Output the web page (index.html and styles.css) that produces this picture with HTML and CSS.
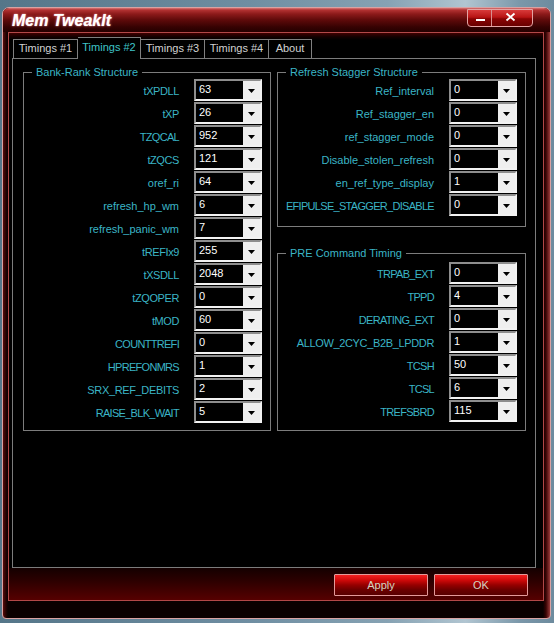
FILE: index.html
```html
<!DOCTYPE html>
<html>
<head>
<meta charset="utf-8">
<title>Mem TweakIt</title>
<link rel="stylesheet" href="styles.css">
</head>
<body>
<div class="window">
  <div class="titlebar">
    <span class="title">Mem TweakIt</span>
    <div class="caption-btns">
      <span class="cbtn min"><svg width="23" height="16" viewBox="0 0 23 16"><rect x="8" y="9" width="9" height="2" fill="#fff"/></svg></span>
      <span class="cbtn close"><svg width="40" height="16" viewBox="0 0 40 16"><path d="M14.5 3.5L22.5 10.5M22.5 3.5L14.5 10.5" stroke="#fff" stroke-width="1.8" fill="none"/></svg></span>
    </div>
  </div>
  <div class="client">
    <div class="tabs">
      <span class="tab w1">Timings #1</span>
      <span class="tab w2 active">Timings #2</span>
      <span class="tab w3">Timings #3</span>
      <span class="tab w4">Timings #4</span>
      <span class="tab w5">About</span>
    </div>
    <div class="panel">
      <div class="cols">
        <fieldset class="group left">
          <legend>Bank-Rank Structure</legend>
          <div class="row"><span class="lbl mc">tXPDLL</span><span class="combo"><span class="val">63</span><span class="drop"><svg width="7" height="4" viewBox="0 0 7 4"><path d="M0 0H7L3.5 4Z"/></svg></span></span></div>
          <div class="row"><span class="lbl mc">tXP</span><span class="combo"><span class="val">26</span><span class="drop"><svg width="7" height="4" viewBox="0 0 7 4"><path d="M0 0H7L3.5 4Z"/></svg></span></span></div>
          <div class="row"><span class="lbl caps">TZQCAL</span><span class="combo"><span class="val">952</span><span class="drop"><svg width="7" height="4" viewBox="0 0 7 4"><path d="M0 0H7L3.5 4Z"/></svg></span></span></div>
          <div class="row"><span class="lbl mc">tZQCS</span><span class="combo"><span class="val">121</span><span class="drop"><svg width="7" height="4" viewBox="0 0 7 4"><path d="M0 0H7L3.5 4Z"/></svg></span></span></div>
          <div class="row"><span class="lbl">oref_ri</span><span class="combo"><span class="val">64</span><span class="drop"><svg width="7" height="4" viewBox="0 0 7 4"><path d="M0 0H7L3.5 4Z"/></svg></span></span></div>
          <div class="row"><span class="lbl">refresh_hp_wm</span><span class="combo"><span class="val">6</span><span class="drop"><svg width="7" height="4" viewBox="0 0 7 4"><path d="M0 0H7L3.5 4Z"/></svg></span></span></div>
          <div class="row"><span class="lbl">refresh_panic_wm</span><span class="combo"><span class="val">7</span><span class="drop"><svg width="7" height="4" viewBox="0 0 7 4"><path d="M0 0H7L3.5 4Z"/></svg></span></span></div>
          <div class="row"><span class="lbl mc">tREFIx9</span><span class="combo"><span class="val">255</span><span class="drop"><svg width="7" height="4" viewBox="0 0 7 4"><path d="M0 0H7L3.5 4Z"/></svg></span></span></div>
          <div class="row"><span class="lbl mc">tXSDLL</span><span class="combo"><span class="val">2048</span><span class="drop"><svg width="7" height="4" viewBox="0 0 7 4"><path d="M0 0H7L3.5 4Z"/></svg></span></span></div>
          <div class="row"><span class="lbl mc">tZQOPER</span><span class="combo"><span class="val">0</span><span class="drop"><svg width="7" height="4" viewBox="0 0 7 4"><path d="M0 0H7L3.5 4Z"/></svg></span></span></div>
          <div class="row"><span class="lbl mc">tMOD</span><span class="combo"><span class="val">60</span><span class="drop"><svg width="7" height="4" viewBox="0 0 7 4"><path d="M0 0H7L3.5 4Z"/></svg></span></span></div>
          <div class="row"><span class="lbl caps">COUNTTREFI</span><span class="combo"><span class="val">0</span><span class="drop"><svg width="7" height="4" viewBox="0 0 7 4"><path d="M0 0H7L3.5 4Z"/></svg></span></span></div>
          <div class="row"><span class="lbl caps">HPREFONMRS</span><span class="combo"><span class="val">1</span><span class="drop"><svg width="7" height="4" viewBox="0 0 7 4"><path d="M0 0H7L3.5 4Z"/></svg></span></span></div>
          <div class="row"><span class="lbl caps wide">SRX_REF_DEBITS</span><span class="combo"><span class="val">2</span><span class="drop"><svg width="7" height="4" viewBox="0 0 7 4"><path d="M0 0H7L3.5 4Z"/></svg></span></span></div>
          <div class="row"><span class="lbl caps">RAISE_BLK_WAIT</span><span class="combo"><span class="val">5</span><span class="drop"><svg width="7" height="4" viewBox="0 0 7 4"><path d="M0 0H7L3.5 4Z"/></svg></span></span></div>
        </fieldset>
        <div class="rightcol">
          <fieldset class="group g1">
            <legend>Refresh Stagger Structure</legend>
            <div class="row"><span class="lbl">Ref_interval</span><span class="combo"><span class="val">0</span><span class="drop"><svg width="7" height="4" viewBox="0 0 7 4"><path d="M0 0H7L3.5 4Z"/></svg></span></span></div>
            <div class="row"><span class="lbl">Ref_stagger_en</span><span class="combo"><span class="val">0</span><span class="drop"><svg width="7" height="4" viewBox="0 0 7 4"><path d="M0 0H7L3.5 4Z"/></svg></span></span></div>
            <div class="row"><span class="lbl">ref_stagger_mode</span><span class="combo"><span class="val">0</span><span class="drop"><svg width="7" height="4" viewBox="0 0 7 4"><path d="M0 0H7L3.5 4Z"/></svg></span></span></div>
            <div class="row"><span class="lbl">Disable_stolen_refresh</span><span class="combo"><span class="val">0</span><span class="drop"><svg width="7" height="4" viewBox="0 0 7 4"><path d="M0 0H7L3.5 4Z"/></svg></span></span></div>
            <div class="row"><span class="lbl">en_ref_type_display</span><span class="combo"><span class="val">1</span><span class="drop"><svg width="7" height="4" viewBox="0 0 7 4"><path d="M0 0H7L3.5 4Z"/></svg></span></span></div>
            <div class="row"><span class="lbl caps">EFIPULSE_STAGGER_DISABLE</span><span class="combo"><span class="val">0</span><span class="drop"><svg width="7" height="4" viewBox="0 0 7 4"><path d="M0 0H7L3.5 4Z"/></svg></span></span></div>
          </fieldset>
          <fieldset class="group g2">
            <legend>PRE Command Timing</legend>
            <div class="row"><span class="lbl caps">TRPAB_EXT</span><span class="combo"><span class="val">0</span><span class="drop"><svg width="7" height="4" viewBox="0 0 7 4"><path d="M0 0H7L3.5 4Z"/></svg></span></span></div>
            <div class="row"><span class="lbl caps">TPPD</span><span class="combo"><span class="val">4</span><span class="drop"><svg width="7" height="4" viewBox="0 0 7 4"><path d="M0 0H7L3.5 4Z"/></svg></span></span></div>
            <div class="row"><span class="lbl caps">DERATING_EXT</span><span class="combo"><span class="val">0</span><span class="drop"><svg width="7" height="4" viewBox="0 0 7 4"><path d="M0 0H7L3.5 4Z"/></svg></span></span></div>
            <div class="row"><span class="lbl caps wide">ALLOW_2CYC_B2B_LPDDR</span><span class="combo"><span class="val">1</span><span class="drop"><svg width="7" height="4" viewBox="0 0 7 4"><path d="M0 0H7L3.5 4Z"/></svg></span></span></div>
            <div class="row"><span class="lbl caps">TCSH</span><span class="combo"><span class="val">50</span><span class="drop"><svg width="7" height="4" viewBox="0 0 7 4"><path d="M0 0H7L3.5 4Z"/></svg></span></span></div>
            <div class="row"><span class="lbl caps">TCSL</span><span class="combo"><span class="val">6</span><span class="drop"><svg width="7" height="4" viewBox="0 0 7 4"><path d="M0 0H7L3.5 4Z"/></svg></span></span></div>
            <div class="row"><span class="lbl caps">TREFSBRD</span><span class="combo"><span class="val">115</span><span class="drop"><svg width="7" height="4" viewBox="0 0 7 4"><path d="M0 0H7L3.5 4Z"/></svg></span></span></div>
          </fieldset>
        </div>
      </div>
    </div>
    <div class="footer">
      <button class="btn">Apply</button>
      <button class="btn">OK</button>
    </div>
  </div>
</div>
</body>
</html>
```

FILE: styles.css
```css
html, body {
  margin: 0;
  padding: 0;
}

body {
  width: 554px;
  height: 623px;
  overflow: hidden;
  background: linear-gradient(to right, #557689 0%, #6f8ea2 45%, #86a2b3 70%, #b1c5d1 84%, #7a97a9 94%, #6d8b9e 100%);
  font-family: "Liberation Sans", Arial, sans-serif;
  font-size: 11px;
}

.window {
  box-sizing: border-box;
  width: 549px;
  height: 612px;
  margin: 7px 0 0 2px;
  border: 1px solid #d9a2a2;
  border-radius: 7px 7px 4px 4px;
  background: linear-gradient(to right, #5a0c0c 0px, #240202 3px, #0a0000 5px, #0a0000 calc(100% - 7px), #3a0404 calc(100% - 4px), #9a3a3a 100%);
  display: flex;
  flex-direction: column;
  overflow: hidden;
}

.titlebar {
  flex: none;
  height: 24px;
  display: flex;
  justify-content: space-between;
  align-items: flex-start;
  background: linear-gradient(to bottom, #d77575 0px, #b33232 2px, #8c1a1a 6px, #5e0a0a 12px, #360202 19px, #240000 24px);
}

.title {
  padding: 2px 0 0 9px;
  line-height: 21px;
  font-family: "Liberation Sans", Arial, sans-serif;
  font-size: 16px;
  font-weight: bold;
  font-style: italic;
  color: #ffffff;
  text-shadow: 0 0 3px rgba(255, 150, 150, 0.7), 0 0 1px #ffd0d0;
}

.caption-btns {
  display: flex;
  margin: 1px 17px 0 0;
  border: 1px solid #e4a4a4;
  border-radius: 0 0 4px 4px;
  overflow: hidden;
  background: linear-gradient(to bottom, #d83a3a 0%, #b81414 45%, #8a0404 55%, #6a0000 100%);
}

.cbtn {
  display: block;
  height: 16px;
}

.cbtn svg {
  display: block;
}

.cbtn.min {
  width: 23px;
  border-right: 1px solid #d89090;
}

.cbtn.close {
  width: 40px;
}

.client {
  box-sizing: border-box;
  width: 536px;
  height: 569px;
  margin-left: 5px;
  border: 1px solid #b34848;
  background: linear-gradient(to bottom, #3e0000 0px, #120000 4px, #000000 7px);
  display: flex;
  flex-direction: column;
}

.tabs {
  flex: none;
  height: 21px;
  margin-top: 4px;
  padding-left: 4px;
  display: flex;
  align-items: flex-end;
}

.tab {
  box-sizing: border-box;
  height: 19px;
  border: 1px solid #808080;
  border-bottom: 0;
  background: #000;
  color: #d2d2d2;
  text-align: center;
  line-height: 17px;
  white-space: nowrap;
}

.tab.active {
  position: relative;
  z-index: 1;
  height: 22px;
  margin-bottom: -1px;
  line-height: 18px;
  color: #3fc4c8;
}

.w1 { width: 65px; }
.w2 { width: 63px; }
.w3 { width: 64px; }
.w4 { width: 64px; }
.w5 { width: 43px; }

.tab + .tab {
  border-left: 0;
}

.panel {
  flex: none;
  box-sizing: border-box;
  width: 524px;
  height: 510px;
  margin-left: 3px;
  border: 1px solid #7c7c7c;
  background: #000;
  padding: 7px 9px 0 10px;
}

.cols {
  display: flex;
  gap: 6px;
}

.group {
  margin: 0;
  padding: 0 8px 7px 0;
  border: 1px solid #7c7c7c;
  min-width: 0;
}

.group legend {
  margin-left: 8px;
  padding: 0 4px;
  line-height: 13px;
  font-size: 11px;
  color: #3bb5c6;
}

.group.left {
  flex: 0 0 248px;
  box-sizing: border-box;
}

.rightcol {
  flex: 0 0 249px;
  display: flex;
  flex-direction: column;
}

.group.g1 {
  padding-bottom: 10px;
}

.group.g2 {
  flex: 1;
  margin-top: 20px;
  padding-top: 2px;
}

.row {
  display: flex;
  align-items: center;
  height: 22px;
}

.row + .row {
  margin-top: 1px;
}

.lbl {
  flex: 1;
  min-width: 0;
  padding-right: 15px;
  text-align: right;
  white-space: nowrap;
  color: #3bb5c6;
  padding-top: 2px;
}

.lbl.caps {
  letter-spacing: -0.7px;
}

.lbl.caps.wide {
  letter-spacing: -0.35px;
}

.lbl.mc {
  letter-spacing: -0.4px;
}

.combo {
  flex: none;
  box-sizing: border-box;
  width: 68px;
  height: 22px;
  border: 2px solid;
  border-color: #8e8e8e #f2f2f2 #f2f2f2 #8e8e8e;
  display: flex;
  background: #000;
}

.val {
  flex: 1;
  padding-left: 3px;
  color: #ffffff;
  line-height: 17px;
}

.drop {
  flex: none;
  width: 17px;
  background: #efefef;
  display: flex;
  align-items: center;
  justify-content: center;
  padding-top: 1px;
  box-sizing: border-box;
}

.drop svg {
  display: block;
  fill: #000;
}

.footer {
  flex: 1;
  display: flex;
  justify-content: flex-end;
  gap: 6px;
  padding: 6px 15px 0 0;
  background: linear-gradient(to bottom, #140000 0%, #2c0000 40%, #560000 100%);
}

.btn {
  box-sizing: border-box;
  width: 94px;
  height: 22px;
  padding: 0;
  border: 1px solid #e49a9a;
  border-radius: 1px;
  background: linear-gradient(to bottom, #f22020 0%, #d00a0a 25%, #960000 50%, #6a0000 75%, #580000 100%);
  color: #d4d4c2;
  font-family: "Liberation Sans", Arial, sans-serif;
  font-size: 11px;
  line-height: 20px;
}
```
